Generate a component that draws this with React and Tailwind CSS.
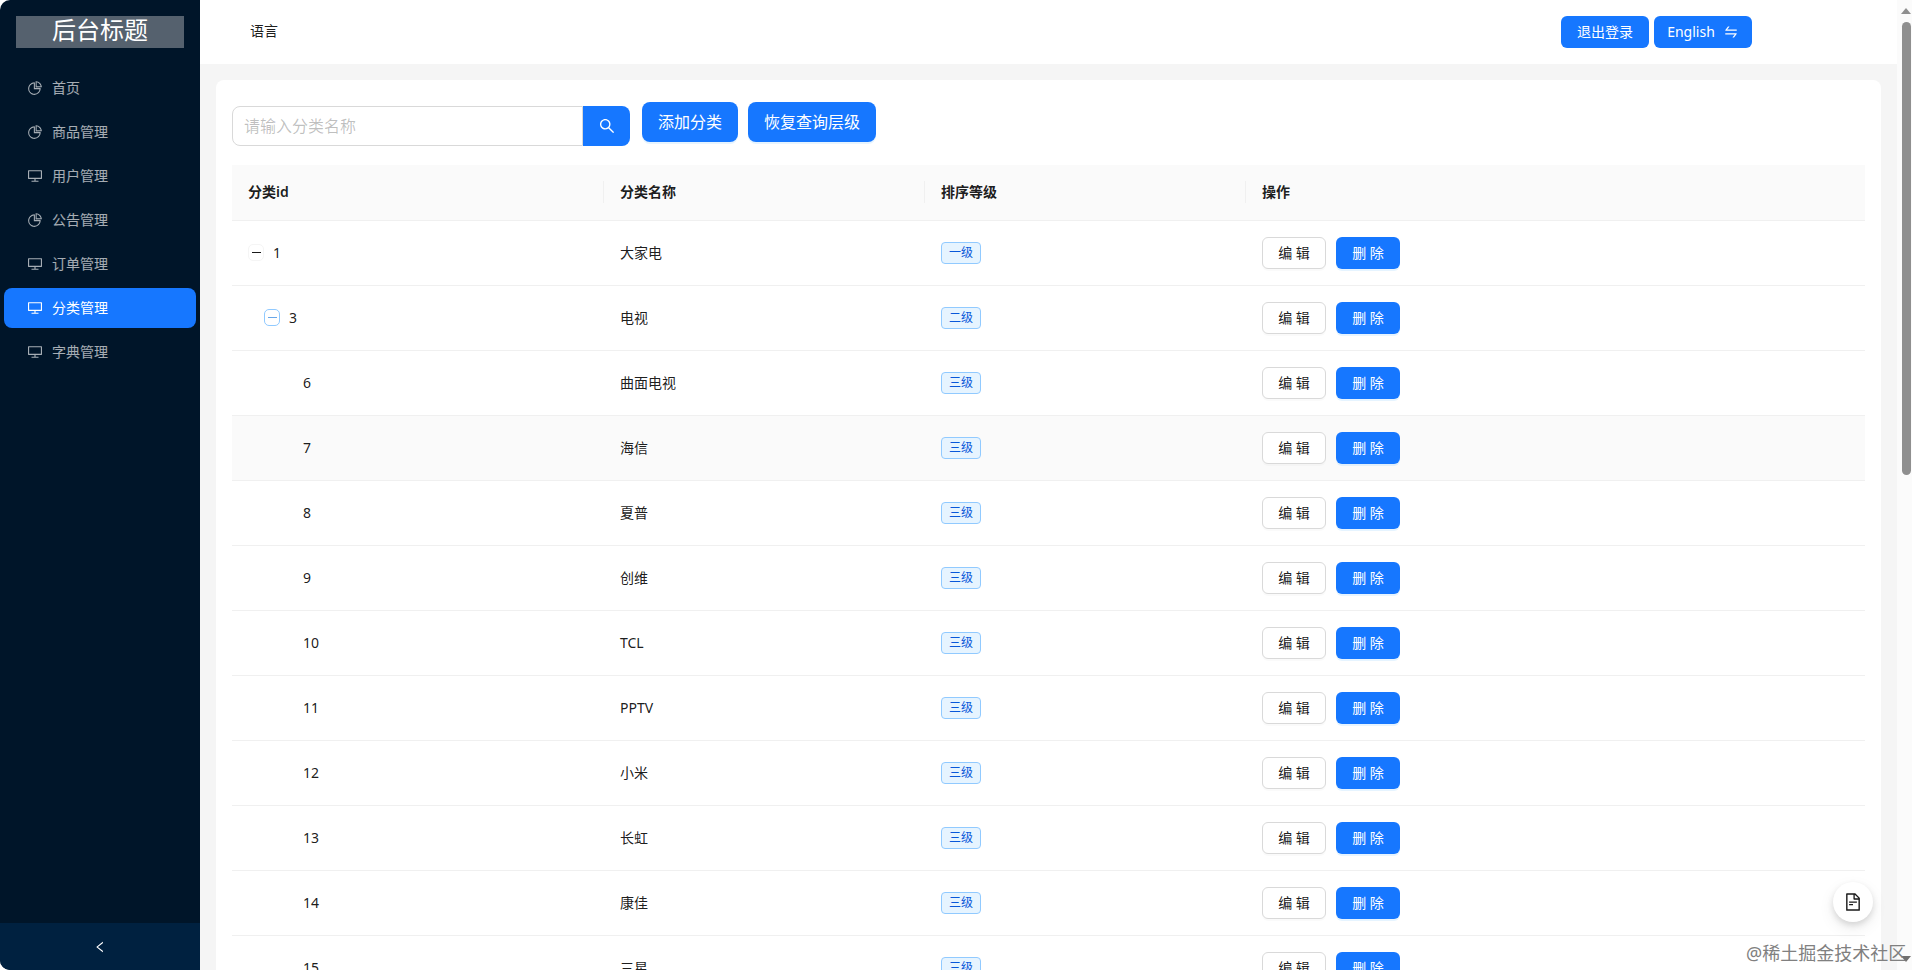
import { AiOutlinePieChart, AiOutlineDesktop, AiOutlineSearch, AiOutlineLeft, AiOutlineSwap, AiOutlineFileText } from 'react-icons/ai'

const MENU = [
  { label: '首页', icon: 'pie' },
  { label: '商品管理', icon: 'pie' },
  { label: '用户管理', icon: 'desktop' },
  { label: '公告管理', icon: 'pie' },
  { label: '订单管理', icon: 'desktop' },
  { label: '分类管理', icon: 'desktop', active: true },
  { label: '字典管理', icon: 'desktop' },
]

const ROWS = [
  { id: 1, name: '大家电', level: '一级', depth: 0 },
  { id: 3, name: '电视', level: '二级', depth: 1 },
  { id: 6, name: '曲面电视', level: '三级', depth: 2 },
  { id: 7, name: '海信', level: '三级', depth: 2, hover: true },
  { id: 8, name: '夏普', level: '三级', depth: 2 },
  { id: 9, name: '创维', level: '三级', depth: 2 },
  { id: 10, name: 'TCL', level: '三级', depth: 2 },
  { id: 11, name: 'PPTV', level: '三级', depth: 2 },
  { id: 12, name: '小米', level: '三级', depth: 2 },
  { id: 13, name: '长虹', level: '三级', depth: 2 },
  { id: 14, name: '康佳', level: '三级', depth: 2 },
  { id: 15, name: '三星', level: '三级', depth: 2 },
]

function Sidebar() {
  return (
    <aside className="w-[200px] shrink-0 h-full bg-[#001529] flex flex-col rounded-tl-[10px] rounded-bl-[10px] overflow-hidden">
      <div className="mx-4 mt-4 h-8 bg-[#55616e] text-white text-[24px] leading-7 text-center">后台标题</div>
      <nav className="flex-1 px-1 pt-5 flex flex-col gap-1">
        {MENU.map((m) => (
          <div
            key={m.label}
            className={`h-10 rounded-lg pl-[23px] flex items-center gap-[9px] text-sm leading-[38px] ${m.active ? 'bg-[#1677ff] text-white' : 'text-white/65'}`}
          >
            {m.icon === 'pie' ? <AiOutlinePieChart className="w-4 h-4" /> : <AiOutlineDesktop className="w-4 h-4" />}
            <span>{m.label}</span>
          </div>
        ))}
      </nav>
      <div className="h-[47px] bg-[#002140] flex items-center justify-center text-white">
        <AiOutlineLeft className="w-[14px] h-[14px]" />
      </div>
    </aside>
  )
}

function Header() {
  return (
    <header className="h-16 shrink-0 bg-white flex items-center pl-[50px] pr-[145px] text-sm text-black/90">
      <span className="flex-1 pb-0.5">语言</span>
      <button className="h-8 w-[88px] rounded-md bg-[#1677ff] text-white text-sm">退出登录</button>
      <button className="ml-[5px] h-8 w-[98px] rounded-md bg-[#1677ff] text-white text-sm flex items-center justify-center gap-2">
        English <AiOutlineSwap className="w-4 h-4" />
      </button>
    </header>
  )
}

function Toolbar() {
  return (
    <div className="flex items-start">
      <div className="mt-1 flex h-10 w-[398px]">
        <input
          placeholder="请输入分类名称"
          className="flex-1 min-w-0 border border-[#d9d9d9] rounded-l-lg px-[11px] text-base outline-none placeholder:text-black/25"
        />
        <button className="w-[47px] bg-[#1677ff] text-white rounded-r-lg flex items-center justify-center">
          <AiOutlineSearch className="w-[18px] h-[18px]" />
        </button>
      </div>
      <button className="ml-3 h-10 w-[96px] rounded-lg bg-[#1677ff] text-white text-base shadow-[0_2px_0_rgba(5,145,255,0.1)]">添加分类</button>
      <button className="ml-[10px] h-10 w-[128px] rounded-lg bg-[#1677ff] text-white text-base shadow-[0_2px_0_rgba(5,145,255,0.1)]">恢复查询层级</button>
    </div>
  )
}

function HeadCell({ children, sep }) {
  return (
    <th className="relative px-4 text-left text-sm font-semibold text-black/90">
      {children}
      {sep && <span className="absolute right-0 top-1/2 -translate-y-1/2 w-px h-[22px] bg-[#f0f0f0]" />}
    </th>
  )
}

function IdCell({ row }) {
  if (row.depth === 2) return <span className="pl-[55px]">{row.id}</span>
  return (
    <span className={`flex items-center gap-[9px] ${row.depth === 1 ? 'pl-4' : ''}`}>
      <span
        className={`w-4 h-[17px] rounded-[5px] border flex items-center justify-center ${row.depth === 1 ? 'border-[#91caff] text-[#69a7e8]' : 'border-[#f5f5f5] text-black/90'}`}
      >
        <span className="block w-[9px] h-px bg-current" />
      </span>
      <span>{row.id}</span>
    </span>
  )
}

function CategoryTable() {
  return (
    <table className="mt-[19px] w-full table-fixed border-collapse text-sm text-black/90">
      <colgroup>
        <col className="w-[372px]" />
        <col className="w-[321px]" />
        <col className="w-[321px]" />
        <col />
      </colgroup>
      <thead>
        <tr className="h-[55px] bg-[#fafafa] border-b border-[#f0f0f0]">
          <HeadCell sep>分类id</HeadCell>
          <HeadCell sep>分类名称</HeadCell>
          <HeadCell sep>排序等级</HeadCell>
          <HeadCell>操作</HeadCell>
        </tr>
      </thead>
      <tbody>
        {ROWS.map((r) => (
          <tr key={r.id} className={`h-[65px] border-b border-[#f0f0f0] ${r.hover ? 'bg-[#fafafa]' : ''}`}>
            <td className="px-4"><IdCell row={r} /></td>
            <td className="px-4">{r.name}</td>
            <td className="px-4">
              <span className="inline-block h-[22px] leading-5 px-[7px] rounded border border-[#91caff] bg-[#e6f4ff] text-[#0958d9] text-xs">{r.level}</span>
            </td>
            <td className="px-4">
              <div className="flex gap-[10px]">
                <button className="h-8 w-16 rounded-md border border-[#d9d9d9] bg-white shadow-[0_2px_0_rgba(0,0,0,0.02)]">编 辑</button>
                <button className="h-8 w-16 rounded-md bg-[#1677ff] text-white shadow-[0_2px_0_rgba(5,145,255,0.1)]">删 除</button>
              </div>
            </td>
          </tr>
        ))}
      </tbody>
    </table>
  )
}

function Scrollbar() {
  return (
    <div className="w-[15px] shrink-0 bg-[#fbfbfb] flex flex-col items-center pl-[3px]">
      <svg width="10" height="6" viewBox="0 0 10 6" className="mt-2"><path d="M5 0 10 6H0z" fill="#8f8f8f" /></svg>
      <div className="mt-[8px] w-[9px] h-[453px] rounded-full bg-[#8f8f8f]" />
      <svg width="10" height="6" viewBox="0 0 10 6" className="mt-auto mb-2"><path d="M5 6 10 0H0z" fill="#707070" /></svg>
    </div>
  )
}

export default function App() {
  return (
    <div
      className="relative flex h-screen w-full overflow-hidden bg-white"
      style={{ fontFamily: '"Noto Sans", "Noto Sans CJK SC", sans-serif' }}
    >
      <Sidebar />
      <main className="flex-1 min-w-0 flex flex-col bg-[#f5f5f5] overflow-hidden">
        <Header />
        <div className="flex-1 px-4 pt-4 overflow-hidden">
          <section className="bg-white rounded-lg px-4 pt-[22px] pb-6">
            <Toolbar />
            <CategoryTable />
          </section>
        </div>
      </main>
      <Scrollbar />

      <button className="absolute left-[1833px] top-[882px] w-10 h-10 rounded-full bg-white shadow-[0_6px_16px_rgba(0,0,0,0.08),0_3px_6px_rgba(0,0,0,0.12)] flex items-center justify-center text-black/90">
        <AiOutlineFileText className="w-5 h-5" />
      </button>
      <span className="absolute left-[1746px] top-[940px] text-[18px] leading-[26px] text-[#808080] whitespace-nowrap">@稀土掘金技术社区</span>
    </div>
  )
}
